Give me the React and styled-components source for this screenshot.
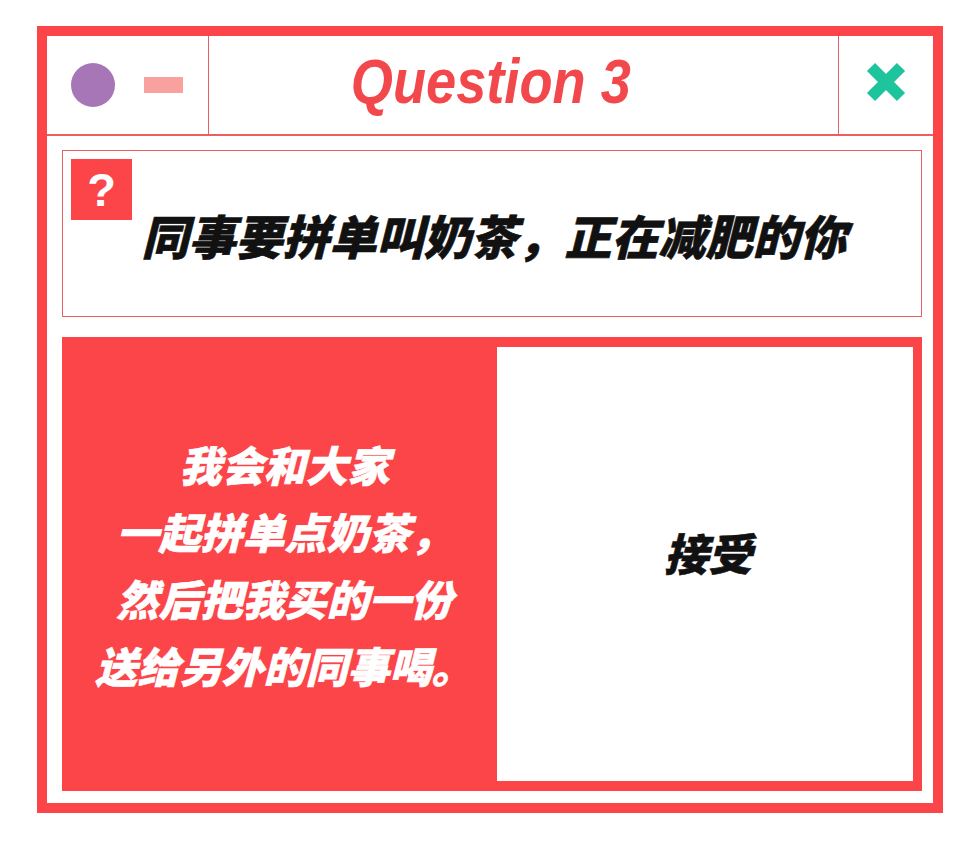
import React from 'react';
import styled, { createGlobalStyle } from 'styled-components';

const palette = {
  red: '#fc4548',
  title: '#f2474b',
  line: '#ea5f62',
  purple: '#a676b6',
  pink: '#f9a19f',
  green: '#1ec49c',
  white: '#ffffff',
  ink: '#111111',
};

const cjk = `"Noto Sans CJK SC", "Noto Sans", sans-serif`;

const GlobalStyle = createGlobalStyle`
  html, body {
    margin: 0;
    padding: 0;
    background: ${palette.white};
  }
  * {
    box-sizing: border-box;
  }
`;

const Page = styled.div`
  padding: 26px 0 0 37px;
`;

const Window = styled.div`
  width: 906px;
  height: 787px;
  border: 10px solid ${palette.red};
  display: flex;
  flex-direction: column;
`;

const TitleBar = styled.div`
  display: grid;
  grid-template-columns: 162px 1fr 95px;
  height: 100px;
  border-bottom: 2px solid ${palette.line};
`;

const Controls = styled.div`
  display: flex;
  align-items: center;
  gap: 29px;
  padding: 0 0 0 24px;
  border-right: 1.5px solid ${palette.line};
`;

const Dot = styled.span`
  width: 44px;
  height: 44px;
  border-radius: 50%;
  background: ${palette.purple};
`;

const Dash = styled.span`
  width: 39px;
  height: 16px;
  background: ${palette.pink};
`;

const Title = styled.div`
  display: flex;
  align-items: center;
  justify-content: center;
  padding: 0 66px 8px 0;

  h1 {
    margin: 0;
    font-family: "Liberation Sans", Arial, sans-serif;
    font-style: italic;
    font-weight: 700;
    font-size: 63px;
    color: ${palette.title};
    transform: scaleX(0.86);
  }
`;

const CloseCell = styled.div`
  display: flex;
  align-items: center;
  justify-content: center;
  padding-bottom: 6px;
  border-left: 1.5px solid ${palette.line};
`;

const Body = styled.div`
  flex: 1;
  display: flex;
  flex-direction: column;
  gap: 20px;
  padding: 14px 11px 12px 15px;
`;

const QuestionBox = styled.div`
  position: relative;
  height: 167px;
  border: 1.5px solid ${palette.line};
  display: flex;
  align-items: center;
  justify-content: center;
  padding: 2px 0 0 4px;
`;

const Badge = styled.span`
  position: absolute;
  left: 8px;
  top: 8px;
  width: 61px;
  height: 61px;
  background: ${palette.red};
  color: ${palette.white};
  font-family: "Liberation Sans", Arial, sans-serif;
  font-weight: 700;
  font-size: 47px;
  line-height: 61px;
  text-align: center;
`;

const Prompt = styled.p`
  margin: 0;
  font-family: ${cjk};
  font-weight: 900;
  font-style: italic;
  font-size: 47px;
  color: ${palette.ink};
  -webkit-text-stroke: 0.6px ${palette.ink};
`;

const AnswerPanel = styled.div`
  flex: 1;
  display: grid;
  grid-template-columns: 435px 1fr;
  padding: 10px 9px 10px 0;
  background: ${palette.red};
`;

const Option = styled.div`
  display: flex;
  align-items: center;
  justify-content: center;
  text-align: center;
  margin: ${({ $filled }) => ($filled ? '-10px 0' : '0')};
  padding: ${({ $filled }) => ($filled ? '0 0 0 10px' : '0 0 24px 6px')};
  background: ${({ $filled }) => ($filled ? palette.red : palette.white)};
  color: ${({ $filled }) => ($filled ? palette.white : palette.ink)};
  -webkit-text-stroke: 0.6px ${({ $filled }) => ($filled ? palette.white : palette.ink)};
  font-family: ${cjk};
  font-weight: 900;
  font-style: italic;
  font-size: ${({ $filled }) => ($filled ? '42px' : '44px')};
  line-height: 67px;
`;

const CloseIcon = () => (
  <svg width="42" height="42" viewBox="0 0 42 42">
    <path
      d="M6 6 L36 36 M36 6 L6 36"
      stroke={palette.green}
      strokeWidth="11.5"
      strokeLinecap="butt"
      fill="none"
    />
  </svg>
);

const App = () => {
  return (
    <Page>
      <GlobalStyle />
      <Window>
        <TitleBar>
          <Controls>
            <Dot />
            <Dash />
          </Controls>
          <Title>
            <h1>Question 3</h1>
          </Title>
          <CloseCell>
            <CloseIcon />
          </CloseCell>
        </TitleBar>
        <Body>
          <QuestionBox>
            <Badge>?</Badge>
            <Prompt>同事要拼单叫奶茶，正在减肥的你</Prompt>
          </QuestionBox>
          <AnswerPanel>
            <Option $filled>
              我会和大家
              <br />
              一起拼单点奶茶，
              <br />
              然后把我买的一份
              <br />
              送给另外的同事喝。
            </Option>
            <Option>接受</Option>
          </AnswerPanel>
        </Body>
      </Window>
    </Page>
  );
};

export default App;
